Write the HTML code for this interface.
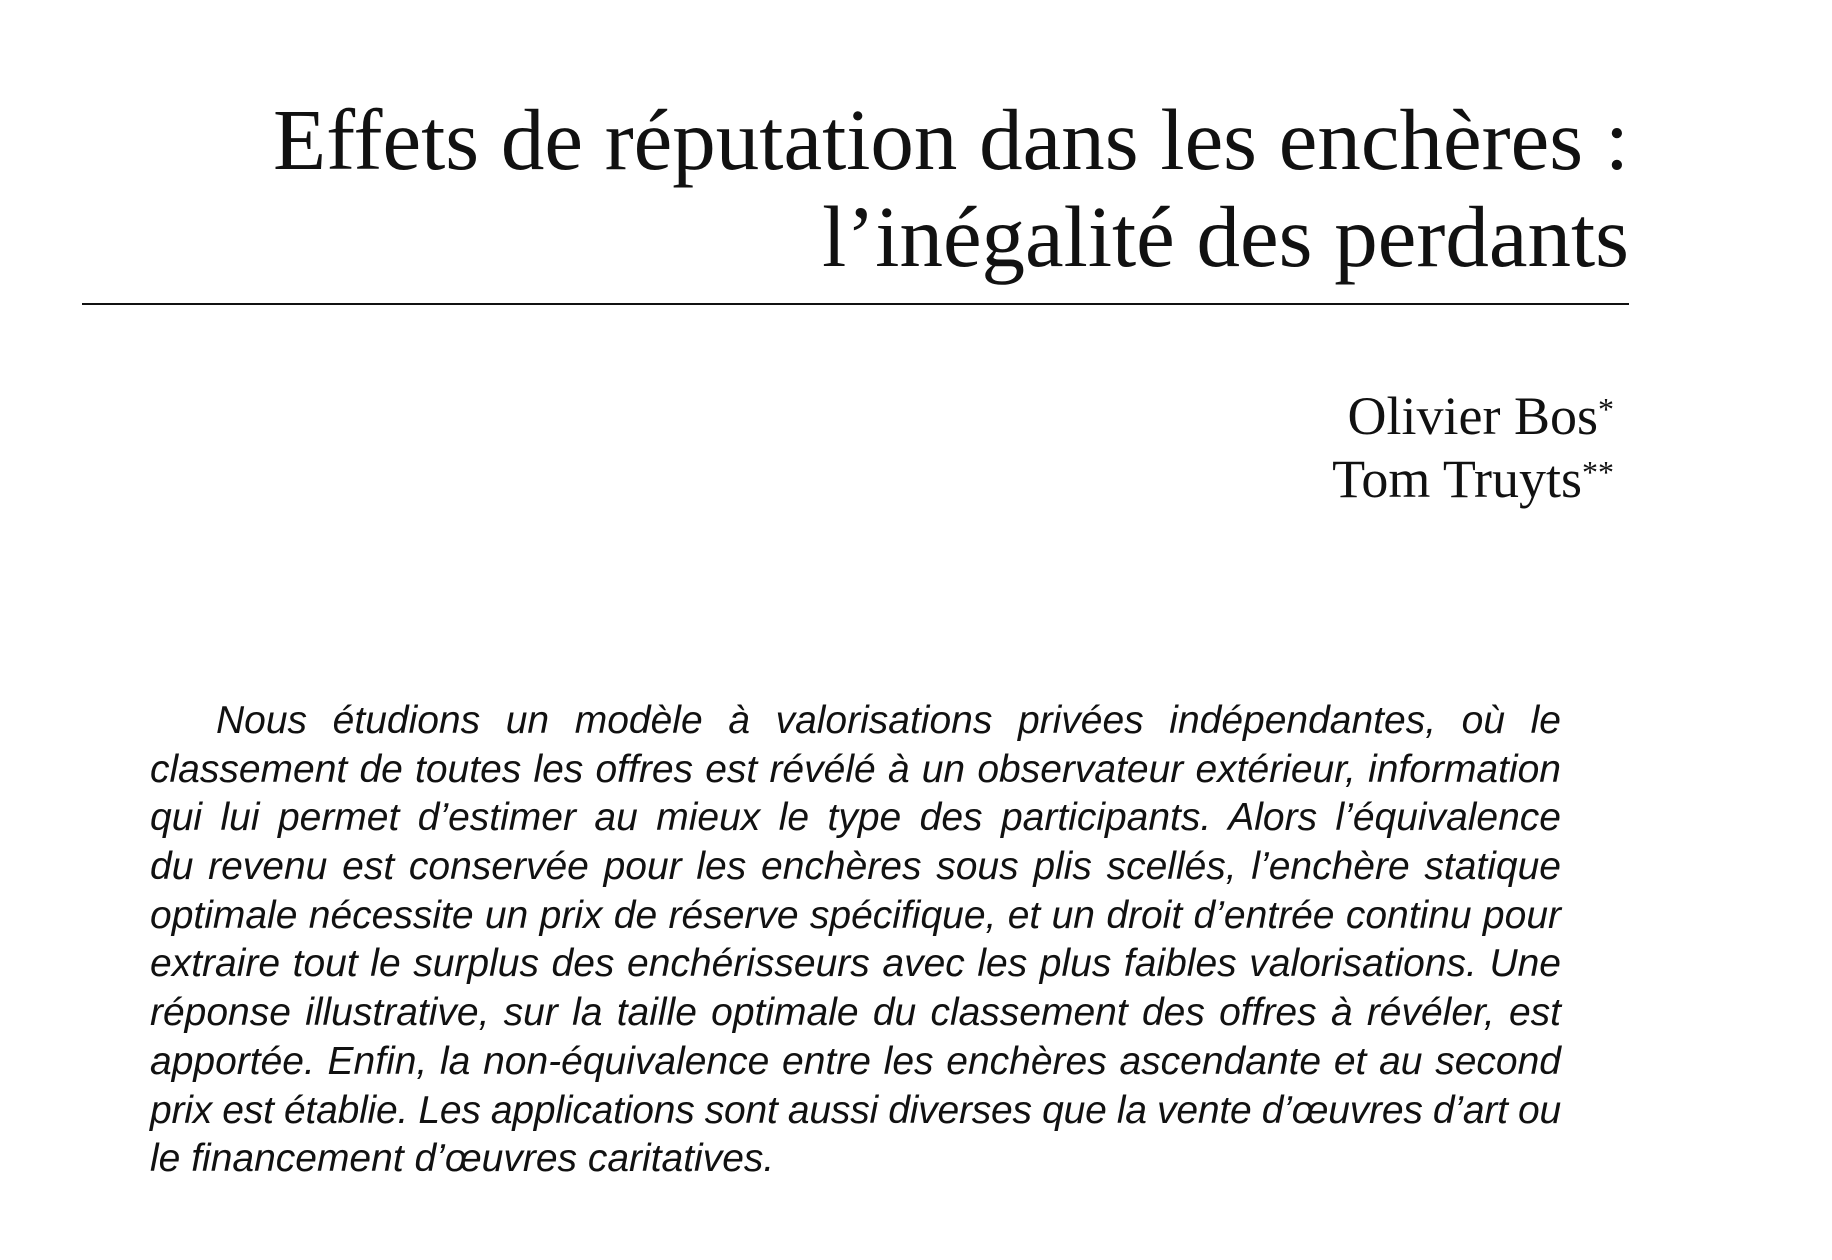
<!DOCTYPE html>
<html><head><meta charset="utf-8"><style>
html,body{margin:0;padding:0;background:#fff;width:1832px;height:1260px;overflow:hidden;color:#111}
.t{position:absolute;right:203px;font-family:"Liberation Serif",serif;font-size:87px;line-height:1;white-space:nowrap;text-align:right}
.rule{position:absolute;left:82px;width:1547px;top:303px;height:2px;background:#111}
.a{position:absolute;right:218px;font-family:"Liberation Serif",serif;font-size:54px;line-height:1;white-space:nowrap}
.a span{font-size:32px;vertical-align:14px}
.ab{position:absolute;left:150px;width:1411px;font-family:"Liberation Sans",sans-serif;font-style:italic;font-size:39px;line-height:48.7px;top:697px;word-spacing:-4px}
.ab div{text-align:justify;text-align-last:justify;height:48.7px;white-space:nowrap}
.ab div.l{text-align-last:left;word-spacing:0}
</style></head><body>
<div class="t" style="top:96px">Effets de réputation dans les enchères :</div>
<div class="t" style="top:193px">l’inégalité des perdants</div>
<div class="rule"></div>
<div class="a" style="top:389px">Olivier Bos<span>*</span></div>
<div class="a" style="top:452px">Tom Truyts<span>**</span></div>
<div class="ab">
<div style="padding-left:66px">Nous étudions un modèle à valorisations privées indépendantes, où le</div>
<div>classement de toutes les offres est révélé à un observateur extérieur, information</div>
<div>qui lui permet d’estimer au mieux le type des participants. Alors l’équivalence</div>
<div>du revenu est conservée pour les enchères sous plis scellés, l’enchère statique</div>
<div>optimale nécessite un prix de réserve spécifique, et un droit d’entrée continu pour</div>
<div>extraire tout le surplus des enchérisseurs avec les plus faibles valorisations. Une</div>
<div>réponse illustrative, sur la taille optimale du classement des offres à révéler, est</div>
<div>apportée. Enfin, la non-équivalence entre les enchères ascendante et au second</div>
<div style="letter-spacing:-0.2px;word-spacing:-6px">prix est établie. Les applications sont aussi diverses que la vente d’œuvres d’art ou</div>
<div class="l">le financement d’œuvres caritatives.</div>
</div>
</body></html>
